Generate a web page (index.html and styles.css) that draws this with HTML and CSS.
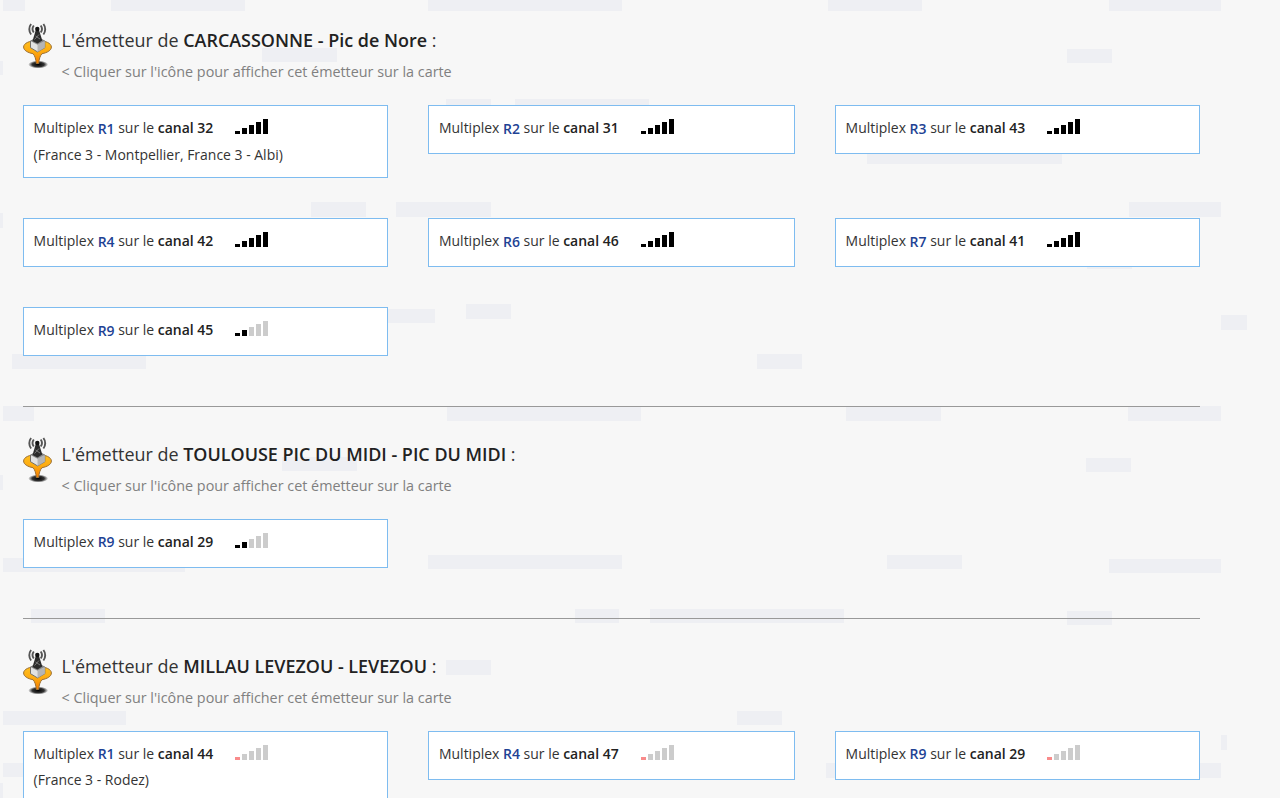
FILE: index.html
```
<!DOCTYPE html>
<html lang="fr">
<head>
  <meta charset="UTF-8">
  <meta name="viewport" content="width=device-width, initial-scale=1.0">
  <title>Émetteurs TNT</title>
  <link rel="stylesheet" href="styles.css">
</head>
<body>
  <!-- Decorative background blocks -->
  <svg class="backdrop" width="1280" height="798" aria-hidden="true">
    <path d="M3 0h22v11h-22z M111 0h134v11h-134z M428 0h194v11h-194z M828 0h94v11h-94z M1109 0h112v11h-112z
      M0 61h3v14h-3z M262 48h75v14h-75z M1067 49h45v14h-45z
      M446 99h45v15h-45z M515 99h134v15h-134z M867 149h195v15h-195z
      M311 202h55v15h-55z M396 202h95v15h-95z M1129 202h92v15h-92z M0 213h3v15h-3z M1087 254h45v15h-45z
      M360 309h75v14h-75z M466 304h45v15h-45z M1221 315h26v15h-26z M12 354h134v15h-134z M757 354h45v15h-45z
      M3 406h31v15h-31z M447 406h194v15h-194z M846 406h95v15h-95z M1128 406h93v15h-93z
      M282 457h75v14h-75z M1086 458h45v14h-45z M0 475h3v15h-3z
      M3 558h182v14h-182z M428 555h194v14h-194z M887 555h75v14h-75z M1109 559h112v14h-112z
      M31 609h74v14h-74z M575 609h44v14h-44z M650 609h194v14h-194z M1067 611h45v14h-45z
      M446 660h45v15h-45z M3 711h123v14h-123z M737 711h45v14h-45z M1221 735h6v15h-6z
      M3 763h30v14h-30z M826 763h40v15h-40z M1180 763h41v15h-41z M0 783h3v15h-3z"/>
  </svg>

  <svg class="defs" aria-hidden="true">
    <defs>
      <linearGradient id="orange" x1="0" y1="0" x2="0" y2="1">
        <stop offset="0" stop-color="#ffc020"/>
        <stop offset="0.5" stop-color="#fdaa10"/>
        <stop offset="1" stop-color="#f57c00"/>
      </linearGradient>
      <radialGradient id="shade">
        <stop offset="0" stop-color="#000"/>
        <stop offset="0.6" stop-color="#111" stop-opacity="0.85"/>
        <stop offset="1" stop-color="#222" stop-opacity="0"/>
      </radialGradient>
      <symbol id="pin" viewBox="0 0 29 46">
        <ellipse cx="15.200" cy="41.500" rx="10" ry="4" fill="url(#shade)"/>
        <path d="M.6 24C.6 20.300 6.500 17.500 14.500 17.500s13.900 2.800 13.900 6.500c0 3.300-4 5.700-9.400 6.700-1.900 1.900-2.900 5.300-3.300 9.800h-2.400c-.4-4.500-1.400-7.900-3.300-9.800C4.600 29.700.6 27.300.6 24z" fill="url(#orange)" stroke="#9a7038" stroke-width="1"/>
        <path d="M7.500 18l7-3.500 7.300 3.500v6.700l-7.300 4.200-7-4.200z" fill="#e2e2e2" stroke="#666" stroke-width=".9"/>
        <path d="M14.500 21.800l7.300-3.800v6.700l-7.300 4.200z" fill="#b5b5b5"/>
        <path d="M7.500 18l7-3.500 7.300 3.500-7.300 3.800z" fill="#888"/>
        <path d="M12.800 7L9.500 18l5 2.500 4.800-3L16 7z" fill="#2b2b2b"/>
        <path d="M12.500 13l4.500 3M16 11.500l-4.500 5" stroke="#999" stroke-width=".7"/>
        <circle cx="14.300" cy="6" r="2.200" fill="#111"/>
        <path d="M10.800 2.500c-1.500 2-1.500 5 0 7M8.100 1c-2.400 3-2.400 7.500 0 10.500M17.700 2.500c1.500 2 1.500 5 0 7M20.400 1c2.400 3 2.400 7.500 0 10.500" fill="none" stroke="#555" stroke-width="1.900"/>
      </symbol>
      <symbol id="bars" viewBox="0 0 33 15">
        <path class="bar1" d="M0 12h5v3H0z"/>
        <path class="bar2" d="M7 9h5v6H7z"/>
        <path class="bar3" d="M14 6h5v9h-5zM21 3h5v12h-5zM28 0h5v15h-5z"/>
      </symbol>
    </defs>
  </svg>

  <main>
    <section class="emetteur">
      <div class="head">
        <svg class="pin"><use href="#pin"/></svg>
        <div>
          <h2>L'émetteur de <strong>CARCASSONNE - Pic de Nore</strong> :</h2>
          <p class="hint">&lt; Cliquer sur l'icône pour afficher cet émetteur sur la carte</p>
        </div>
      </div>
      <div class="grid">
        <div class="mux">
          <div class="line"><span>Multiplex <a class="low">R1</a> sur le <strong>canal 32</strong></span><svg class="bars"><use href="#bars"/></svg></div>
          <div class="local">(France 3 - Montpellier, France 3 - Albi)</div>
        </div>
        <div class="mux">
          <div class="line"><span>Multiplex <a class="low">R2</a> sur le <strong>canal 31</strong></span><svg class="bars"><use href="#bars"/></svg></div>
        </div>
        <div class="mux">
          <div class="line"><span>Multiplex <a class="low">R3</a> sur le <strong>canal 43</strong></span><svg class="bars"><use href="#bars"/></svg></div>
        </div>
        <div class="mux">
          <div class="line"><span>Multiplex <a class="low">R4</a> sur le <strong>canal 42</strong></span><svg class="bars"><use href="#bars"/></svg></div>
        </div>
        <div class="mux">
          <div class="line"><span>Multiplex <a class="low">R6</a> sur le <strong>canal 46</strong></span><svg class="bars"><use href="#bars"/></svg></div>
        </div>
        <div class="mux">
          <div class="line"><span>Multiplex <a class="low">R7</a> sur le <strong>canal 41</strong></span><svg class="bars"><use href="#bars"/></svg></div>
        </div>
        <div class="mux">
          <div class="line"><span>Multiplex <a class="low">R9</a> sur le <strong>canal 45</strong></span><svg class="bars medium"><use href="#bars"/></svg></div>
        </div>
      </div>
    </section>
    <hr>
    <section class="emetteur">
      <div class="head">
        <svg class="pin"><use href="#pin"/></svg>
        <div>
          <h2>L'émetteur de <strong>TOULOUSE PIC DU MIDI - PIC DU MIDI</strong> :</h2>
          <p class="hint">&lt; Cliquer sur l'icône pour afficher cet émetteur sur la carte</p>
        </div>
      </div>
      <div class="grid">
        <div class="mux">
          <div class="line"><span>Multiplex <a>R9</a> sur le <strong>canal 29</strong></span><svg class="bars medium"><use href="#bars"/></svg></div>
        </div>
      </div>
    </section>
    <hr>
    <section class="emetteur">
      <div class="head">
        <svg class="pin"><use href="#pin"/></svg>
        <div>
          <h2>L'émetteur de <strong>MILLAU LEVEZOU - LEVEZOU</strong> :</h2>
          <p class="hint">&lt; Cliquer sur l'icône pour afficher cet émetteur sur la carte</p>
        </div>
      </div>
      <div class="grid">
        <div class="mux">
          <div class="line"><span>Multiplex <a>R1</a> sur le <strong>canal 44</strong></span><svg class="bars weak"><use href="#bars"/></svg></div>
          <div class="local">(France 3 - Rodez)</div>
        </div>
        <div class="mux">
          <div class="line"><span>Multiplex <a>R4</a> sur le <strong>canal 47</strong></span><svg class="bars weak"><use href="#bars"/></svg></div>
        </div>
        <div class="mux">
          <div class="line"><span>Multiplex <a>R9</a> sur le <strong>canal 29</strong></span><svg class="bars weak"><use href="#bars"/></svg></div>
        </div>
      </div>
    </section>
  </main>
</body>
</html>
```
FILE: styles.css
```
* {
  box-sizing: border-box;
}

body {
  margin: 0;
  height: 798px;
  overflow: hidden;
  background-color: #f7f7f7;
  color: #333;
  font-family: "Open Sans", sans-serif;
  font-size: 13.97px;
}

.backdrop {
  position: absolute;
  top: 0;
  left: 0;
  z-index: -1;
  fill: #eeeff3;
}

.defs {
  display: block;
  width: 0;
  height: 0;
}

main {
  width: 1177px;
  margin-left: 23px;
  padding-top: 23px;
}

.head {
  display: flex;
  gap: 9.6px;
  height: 82px;
}

.pin {
  width: 29px;
  height: 46px;
}

h2 {
  margin: 3px 0 0;
  font-size: 17.96px;
  font-weight: 400;
  line-height: 28px;
}

strong {
  font-weight: 600;
  color: #222;
}

.hint {
  margin: 5px 0 0;
  font-size: 14.37px;
  line-height: 26px;
  color: #808080;
}

.grid {
  display: grid;
  grid-template-columns: 365.4px 366.6px 365px;
  gap: 40px;
  align-items: start;
}

.mux {
  padding: 9px 9.6px 11.2px;
  background-color: #fff;
  border: 1px solid #7ebcf0;
}

.line {
  display: flex;
  align-items: center;
  gap: 22px;
  height: 26.6px;
  line-height: 26px;
}

.line a {
  color: #1e4294;
  font-weight: 600;
}

.line a.low {
  position: relative;
  top: 0.6px;
}

.local {
  height: 24.3px;
  line-height: 26px;
}

.bars {
  width: 33px;
  height: 15px;
  margin-top: -3px;
}

.medium {
  --bar3: #ccc;
}

.weak {
  --bar1: #f98b8b;
  --bar2: #ccc;
  --bar3: #ccc;
}

.bar1 {
  fill: var(--bar1, #000);
}

.bar2 {
  fill: var(--bar2, #000);
}

.bar3 {
  fill: var(--bar3, #000);
}

hr {
  height: 1px;
  margin: 50.2px 0 30px;
  border: 0;
  background-color: #999;
}
```
